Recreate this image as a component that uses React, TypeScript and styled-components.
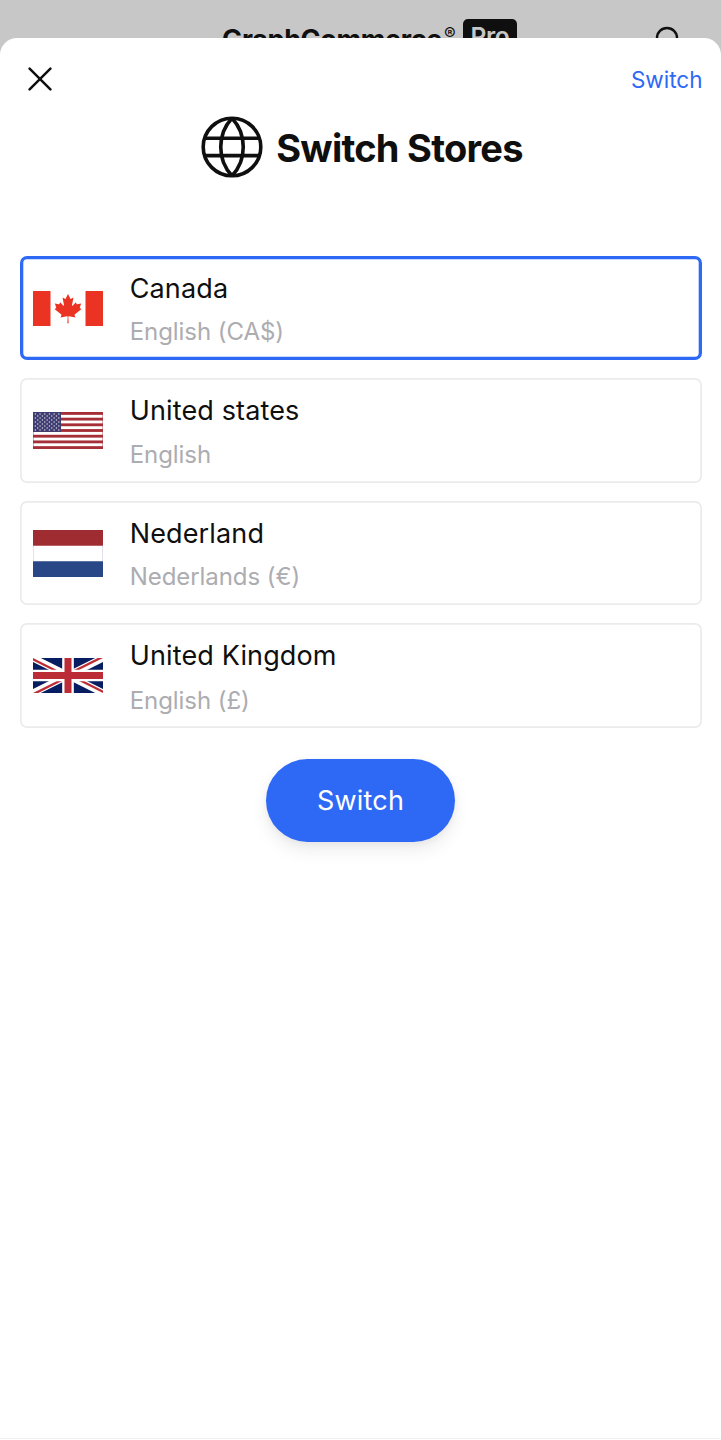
import React, { useState } from 'react';
import styled, { createGlobalStyle } from 'styled-components';

const GlobalStyle = createGlobalStyle`
  * { box-sizing: border-box; }
  body { margin: 0; background: #c7c7c7; font-family: Inter, "Liberation Sans", sans-serif; color: #0f0f0f; }
  button { font: inherit; border: 0; background: none; padding: 0; cursor: pointer; }
`;

const Page = styled.div`
  display: flex;
  flex-direction: column;
  height: 1440px;
  overflow: hidden;
`;

const TopBar = styled.header`
  display: grid;
  grid-template-columns: 1fr auto;
  align-items: start;
  height: 38.4px;
  padding: 19px 40px 0 222px;
`;

const Brand = styled.div`
  display: flex;
  align-items: flex-start;
`;

const BrandName = styled.span`
  width: 222px;
  margin-top: 4px;
  font-size: 27px;
  line-height: 33px;
  font-weight: 700;
  letter-spacing: -0.36px;
  white-space: nowrap;
`;

const Registered = styled.span`
  width: 19px;
  margin-top: 4px;
  font-size: 17.5px;
  line-height: 21px;
`;

const ProBadge = styled.span`
  width: 54px;
  height: 34px;
  border-radius: 5px;
  background: #0f0f0f;
  color: #c7c7c7;
  font-size: 24.5px;
  line-height: 34px;
  font-weight: 600;
  letter-spacing: -0.3px;
  text-align: center;
`;

const SearchSvg = styled.svg`
  margin-top: 5.5px;
`;

const Sheet = styled.main`
  position: relative;
  flex: 1;
  display: flex;
  flex-direction: column;
  background: #fff;
  border-radius: 17px 17px 0 0;
  padding: 0 19.5px;
`;

const SheetBar = styled.div`
  display: flex;
  justify-content: space-between;
  align-items: center;
  height: 77.6px;
  padding: 4px 0 0 8.8px;
  margin-right: -1px;
`;

const IconButton = styled.button`
  display: flex;
  margin-top: -1px;
`;

const LinkButton = styled.button`
  margin-top: 2px;
  color: #2e69f6;
  font-size: 22.5px;
  line-height: 28px;
`;

const Heading = styled.div`
  display: flex;
  align-items: center;
  justify-content: center;
  gap: 13px;
  height: 62px;
  padding-left: 3px;
`;

const Title = styled.h1`
  margin: 3px 0 0;
  font-size: 38px;
  line-height: 46px;
  font-weight: 700;
  letter-spacing: -0.74px;
`;

const StoreList = styled.div`
  display: flex;
  flex-direction: column;
  gap: 18px;
  margin-top: 77.9px;
`;

const StoreCard = styled.button<{ $selected: boolean }>`
  display: flex;
  align-items: center;
  height: 104.5px;
  padding-left: 13.6px;
  border-radius: 7px;
  text-align: left;
  color: inherit;
  box-shadow: inset 0 0 0 ${(p) => (p.$selected ? '3.3px #2e69f6' : '1.7px #ebebeb')};
`;

const FlagSvg = styled.svg`
  flex: none;
  display: block;
`;

const StoreText = styled.span`
  display: flex;
  flex-direction: column;
  margin: 2.4px 0 0 26.6px;
`;

const StoreName = styled.span`
  font-size: 27px;
  line-height: 40px;
  letter-spacing: 0.14px;
`;

const StoreLocale = styled.span<{ $drop: number }>`
  margin-top: ${(p) => 5 + p.$drop}px;
  margin-bottom: ${(p) => -p.$drop}px;
  font-size: 24px;
  line-height: 36px;
  letter-spacing: -0.06px;
  color: #acacb1;
`;

const PrimaryButton = styled.button`
  align-self: center;
  width: 189px;
  height: 83.5px;
  margin-top: 31px;
  border-radius: 42px;
  background: #2e69f6;
  color: #fff;
  font-size: 27px;
  letter-spacing: 0.2px;
  box-shadow: 0 9px 17px rgba(0, 0, 0, 0.07), 0 2px 7px rgba(0, 0, 0, 0.05);
`;

const BottomRule = styled.div`
  height: 1px;
  margin: auto -19.5px 1px;
  background: #eee;
`;

function CanadaFlag() {
  return (
    <FlagSvg width="70" height="35" viewBox="0 0 9600 4800">
      <path fill="#ea3323" d="M0 0h2400v4800H0zM7200 0h2400v4800H7200z" />
      <path
        fill="#ea3323"
        d="m4890 4430-45-863a95 95 0 0 1 111-98l859 151-116-320a65 65 0 0 1 20-73l941-762-212-99a65 65 0 0 1-34-79l186-572-542 115a65 65 0 0 1-73-38l-105-247-423 454a65 65 0 0 1-111-57l204-1052-327 189a65 65 0 0 1-91-27l-332-652-332 652a65 65 0 0 1-91 27l-327-189 204 1052a65 65 0 0 1-111 57l-423-454-105 247a65 65 0 0 1-73 38l-542-115 186 572a65 65 0 0 1-34 79l-212 99 941 762a65 65 0 0 1 20 73l-116 320 859-151a95 95 0 0 1 111 98l-45 863z"
      />
    </FlagSvg>
  );
}

function UsFlag() {
  const stars = [];
  for (let row = 0; row < 9; row++) {
    const count = row % 2 ? 5 : 6;
    for (let i = 0; i < count; i++) {
      stars.push(
        <circle key={`${row}-${i}`} cx={2.4 + i * 4.68 + (row % 2 ? 2.34 : 0)} cy={2 + row * 1.99} r="0.75" />,
      );
    }
  }
  return (
    <FlagSvg width="70" height="37" viewBox="0 0 70 37">
      <path fill="#fff" d="M0 0h70v37H0z" />
      {[0, 1, 2, 3, 4, 5, 6].map((i) => (
        <rect key={i} y={i * 5.692} width="70" height="2.846" fill="#a62f37" />
      ))}
      <rect x="0.25" y="0.25" width="69.5" height="36.5" fill="none" stroke="#a62f37" strokeWidth="0.4" />
      <path fill="#3e3c70" d="M0 0h28v19.9H0z" />
      <g fill="#d5d5e2">{stars}</g>
    </FlagSvg>
  );
}

function NetherlandsFlag() {
  return (
    <FlagSvg width="70" height="47" viewBox="0 0 70 47">
      <path fill="#fff" d="M0 0h70v47H0z" />
      <path fill="#9f2c30" d="M0 0h70v15.7H0z" />
      <path fill="#294686" d="M0 31.3h70V47H0z" />
      <path d="M.25 15.7v15.6M69.75 15.7v15.6" stroke="#a9b2cf" strokeWidth=".5" />
    </FlagSvg>
  );
}

function UkFlag() {
  return (
    <FlagSvg width="70" height="35" viewBox="0 0 60 30">
      <clipPath id="uk-frame"><path d="M0 0h60v30H0z" /></clipPath>
      <clipPath id="uk-saltire"><path d="M30 15h30v15zv15H0zH0V0zV0h30z" /></clipPath>
      <g clipPath="url(#uk-frame)">
        <path fill="#071d62" d="M0 0h60v30H0z" />
        <path d="m0 0 60 30m0-30L0 30" stroke="#fff" strokeWidth="6" />
        <path d="m0 0 60 30m0-30L0 30" stroke="#bb2c37" strokeWidth="4" clipPath="url(#uk-saltire)" />
        <path d="M30 0v30M0 15h60" stroke="#fff" strokeWidth="10" />
        <path d="M30 0v30M0 15h60" stroke="#bb2c37" strokeWidth="6" />
      </g>
    </FlagSvg>
  );
}

function GlobeIcon() {
  return (
    <svg width="62" height="62" viewBox="0 0 62 62" fill="none" stroke="#0f0f0f" strokeWidth="3.6">
      <circle cx="31" cy="31" r="28.8" />
      <path d="M31 2.2C16 18 16 44 31 59.8M31 2.2C46 18 46 44 31 59.8M3.5 22.2h55M3.5 39.6h55" />
    </svg>
  );
}

const stores = [
  { id: 'ca', name: 'Canada', locale: 'English (CA$)', Flag: CanadaFlag, drop: 0 },
  { id: 'us', name: 'United states', locale: 'English', Flag: UsFlag, drop: 0.6 },
  { id: 'nl', name: 'Nederland', locale: 'Nederlands (€)', Flag: NetherlandsFlag, drop: 0 },
  { id: 'uk', name: 'United Kingdom', locale: 'English (£)', Flag: UkFlag, drop: 1.6 },
];

export default function App() {
  const [selected, setSelected] = useState('ca');
  return (
    <Page>
      <GlobalStyle />
      <TopBar>
        <Brand>
          <BrandName>GraphCommerce</BrandName>
          <Registered>®</Registered>
          <ProBadge>Pro</ProBadge>
        </Brand>
        <SearchSvg width="28" height="28" viewBox="0 0 28 28" fill="none" stroke="#0f0f0f" strokeWidth="2.4">
          <circle cx="14" cy="13" r="10" />
          <path d="m21 20 6 6" />
        </SearchSvg>
      </TopBar>
      <Sheet>
        <SheetBar>
          <IconButton aria-label="Close">
            <svg width="24" height="24" viewBox="0 0 24 24" fill="none" stroke="#0f0f0f" strokeWidth="2.5" strokeLinecap="round">
              <path d="m1.6 1.6 20.8 20.8m0-20.8L1.6 22.4" />
            </svg>
          </IconButton>
          <LinkButton>Switch</LinkButton>
        </SheetBar>
        <Heading>
          <GlobeIcon />
          <Title>Switch Stores</Title>
        </Heading>
        <StoreList>
          {stores.map(({ id, name, locale, Flag, drop }) => (
            <StoreCard key={id} $selected={id === selected} onClick={() => setSelected(id)}>
              <Flag />
              <StoreText>
                <StoreName>{name}</StoreName>
                <StoreLocale $drop={drop}>{locale}</StoreLocale>
              </StoreText>
            </StoreCard>
          ))}
        </StoreList>
        <PrimaryButton>Switch</PrimaryButton>
        <BottomRule />
      </Sheet>
    </Page>
  );
}
